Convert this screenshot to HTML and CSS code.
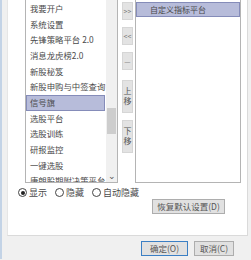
FILE: index.html
```html
<!DOCTYPE html>
<html lang="zh">
<head>
    <meta charset="UTF-8">
    <title>工具栏设置</title>
    <link rel="stylesheet" href="styles.css">
</head>
<body>
    <div class="window">
        <div class="panel">
            <div class="lists">
                <div class="leftList">
                    <ul class="items">
                        <li>我要开户</li>
                        <li>系统设置</li>
                        <li>先锋策略平台 2.0</li>
                        <li>消息龙虎榜2.0</li>
                        <li>新股秘笈</li>
                        <li>新股申购与中签查询</li>
                        <li class="sel">信号旗</li>
                        <li>选股平台</li>
                        <li>选股训练</li>
                        <li>研报监控</li>
                        <li>一键选股</li>
                        <li class="cut">康朗股期附决策平台</li>
                    </ul>
                    <div class="scroll">
                        <div class="thumb"></div>
                        <div class="arrow">&#8964;</div>
                    </div>
                </div>
                <div class="btnCol">
                    <div class="sbtn b1">&gt;&gt;</div>
                    <div class="sbtn b2">&lt;&lt;</div>
                    <div class="sbtn b3">&mdash;</div>
                    <div class="sbtn tall b4">上<br>移</div>
                    <div class="sbtn tall b5">下<br>移</div>
                </div>
                <div class="rightList">
                    <div class="ritem">自定义指标平台</div>
                </div>
            </div>
            <div class="radios">
                <label class="radio"><span class="dot on"></span>显示</label>
                <label class="radio"><span class="dot"></span>隐藏</label>
                <label class="radio"><span class="dot"></span>自动隐藏</label>
            </div>
            <div class="restoreRow">
                <div class="btn restore">恢复默认设置(D)</div>
            </div>
        </div>
        <div class="footer">
            <div class="btn ok">确定(O)</div>
            <div class="btn cancel">取消(C)</div>
        </div>
    </div>
</body>
</html>
```

FILE: styles.css
```css
* { box-sizing: border-box; margin: 0; padding: 0;}
body { width: 251px; height: 260px; overflow: hidden; background: #f0f0f0;
    font-family: "Noto Sans CJK SC", "Noto Sans", sans-serif; font-size: 9px; color: #4a4a4a;}
.window { height: 260px; border-left: 2px solid #c3d3e6;}
.panel { margin-left: 5px; width: 241px; height: 237px; background: white;
    border-left: 1px solid #e6e6e6; border-right: 1px solid #dadada; border-bottom: 1px solid #dadada;}

.lists { display: flex; height: 183px; margin-top: -1px;}
.leftList { display: flex; width: 93px; margin-left: 17px; height: 184px;
    border: 1px solid #b4b4b4; overflow: hidden;}
.items { list-style: none; flex: 1; padding-top: 1px; overflow: hidden;}
.items li { height: 15.67px; line-height: 15.67px; padding-left: 4px; white-space: nowrap; overflow: hidden;
    font-size: 8.4px;}
.items li.sel { background: #b7bcda; border: 1px solid #858cb9; line-height: 13.67px; padding-left: 3px; margin-right: 1px;}
.items li.cut { height: 9px;}
.scroll { width: 11px; background: #f0f0f0; position: relative;}
.thumb { position: absolute; left: 1px; right: 1px; top: 108px; height: 26px; background: #cdcdcd;}
.arrow { position: absolute; left: 0; right: 0; bottom: 2px; text-align: center; font-size: 9px; line-height: 9px; color: #555;}

.btnCol { width: 11px; margin-left: 4px; display: flex; flex-direction: column; padding-top: 3px;}
.sbtn { width: 11px; height: 18px; background: #e3e3e3; border: 1px solid #d6d6d6;
    color: #777; font-size: 7px; text-align: center; line-height: 16px; margin-bottom: 7px;}
.sbtn.b3 { margin-bottom: 10px;}
.sbtn.tall { height: 33px; font-size: 8px; line-height: 10px; padding-top: 5px; color: #555;}

.rightList { width: 106px; margin-left: 2px; height: 184px; border: 1px solid #b4b4b4; padding-top: 2px;}
.ritem { height: 15px; line-height: 13px; background: #b7bcda; border: 1px solid #858cb9; padding-left: 13px; font-size: 8px;}

.radios { display: flex; margin-top: 5px; padding-left: 10px; height: 11px; align-items: center;}
.radio { display: flex; align-items: center; margin-right: 8px;}
.dot { width: 9px; height: 9px; border: 1px solid #444; border-radius: 50%; margin-right: 2px; position: relative;}
.dot.on::after { content: ""; position: absolute; left: 1.5px; top: 1.5px; width: 4px; height: 4px; border-radius: 50%; background: #222;}

.restoreRow { display: flex; padding-left: 144px; margin-top: 1px;}
.btn { background: #e1e1e1; border: 1px solid #adadad; text-align: center; font-size: 8.5px; line-height: 13px; height: 15px; color: #555;}
.restore { width: 73px;}

.footer { display: flex; padding-left: 139px; padding-top: 5px;}
.ok { width: 47px; border-color: #3b7fc4;}
.cancel { width: 40px; margin-left: 6px;}
```
